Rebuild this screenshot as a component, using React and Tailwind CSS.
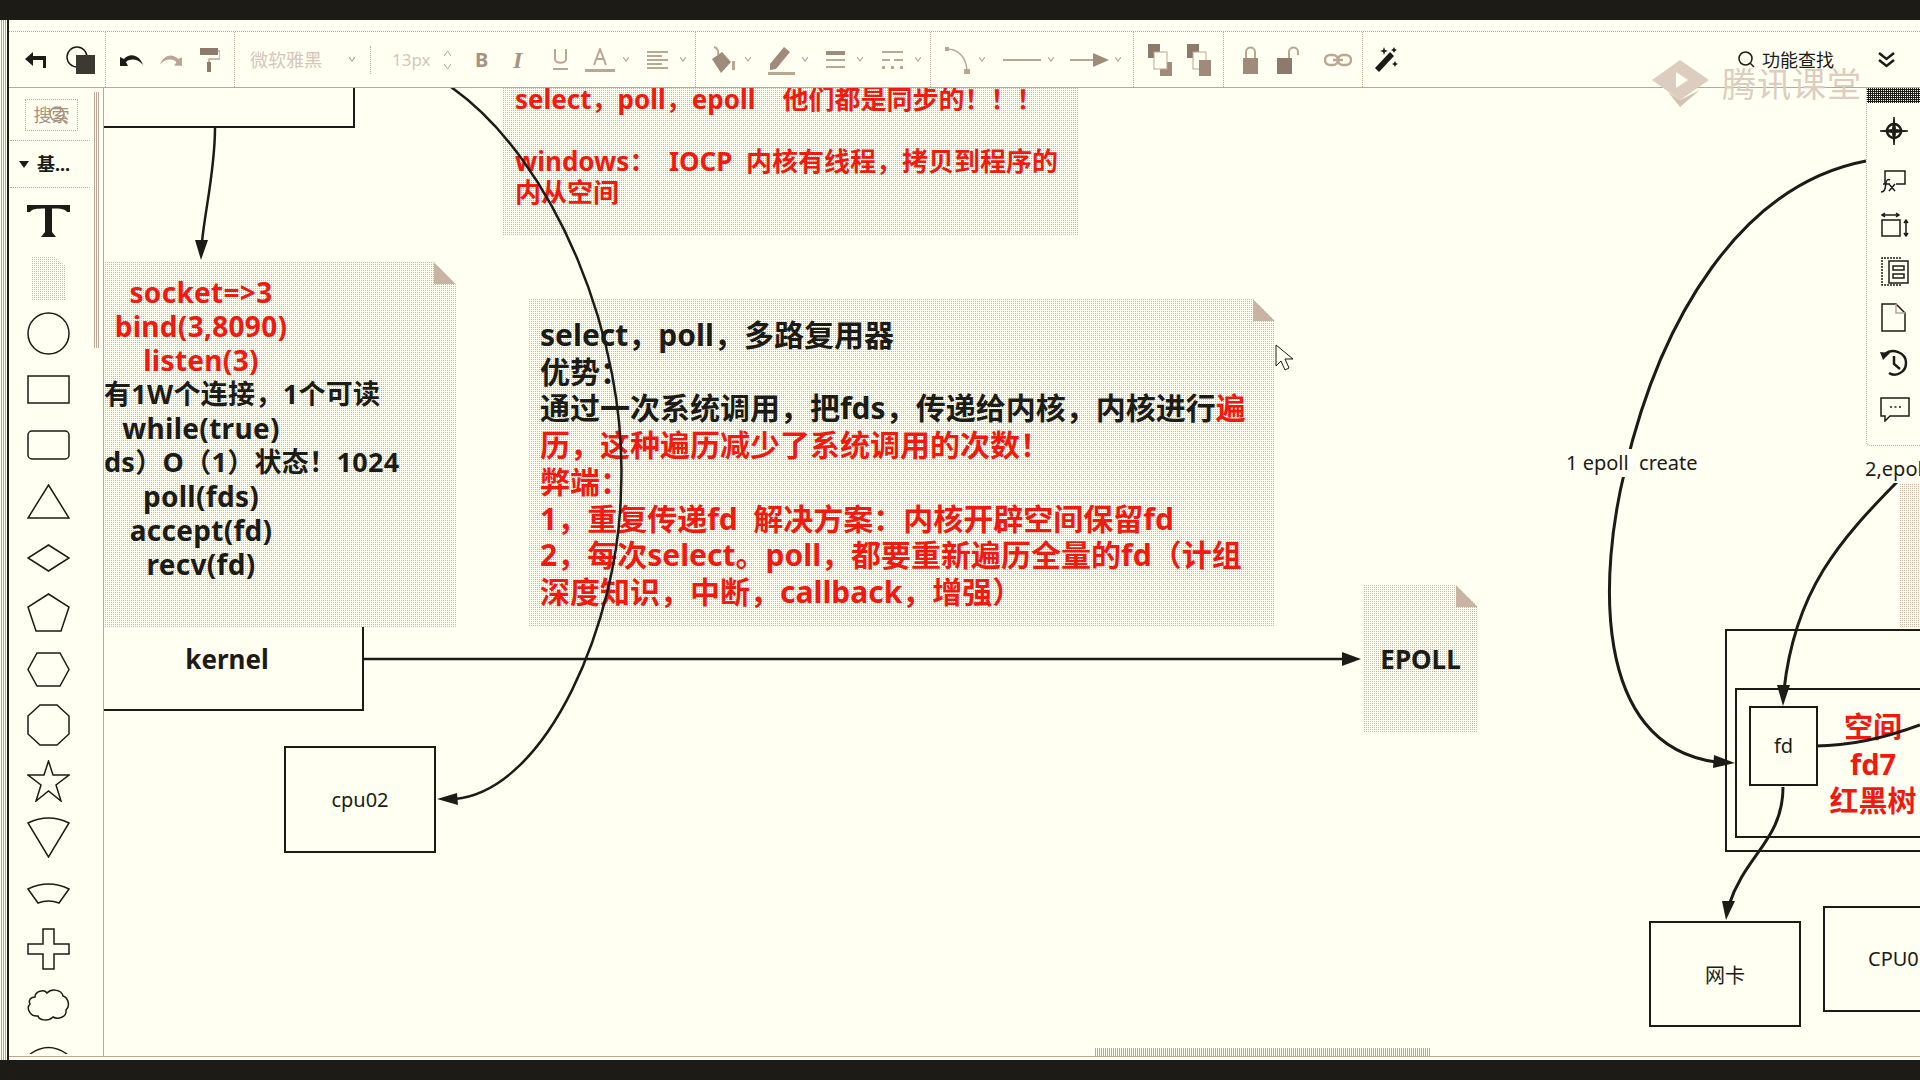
const tan = '#bda594';
const ink = '#1c1b16';

const Caret = ({ className = '' }) => (
  <svg width="6" height="5" viewBox="0 0 6 5" className={`shrink-0 ${className}`}>
    <path d="M0 0 L3 4 L6 0" fill="none" stroke={tan} strokeWidth="1.2" />
  </svg>
);

const Group = ({ className = '', children }) => (
  <div className={`flex h-full shrink-0 items-center border-r border-dotted border-[#bda594] ${className}`}>{children}</div>
);

const Note = ({ className = '', children }) => (
  <div className={`absolute bg-[conic-gradient(#c9b4a4_25%,#fffff2_0)] bg-[length:2px_2px] [clip-path:polygon(0_0,calc(100%-22px)_0,100%_22px,100%_100%,0_100%)] ${className}`}>
    <div className="absolute right-0 top-0 h-[22px] w-[22px] bg-[#c9b4a4] [clip-path:polygon(0_0,100%_100%,0_100%)]" />
    {children}
  </div>
);

const Box = ({ className = '', children }) => (
  <div className={`absolute flex items-center justify-center border-2 border-[#1c1b16] ${className}`}>{children}</div>
);

const Shape = ({ h, className = '', children }) => (
  <svg width="43" height={h} viewBox={`0 0 43 ${h}`} fill="none" stroke={ink} strokeWidth="1.5" className={`block shrink-0 ${className}`}>
    {children}
  </svg>
);

const Sidebar = () => (
  <div className="relative flex w-[95px] shrink-0 flex-col overflow-hidden border-r border-[#bda594]">
    <div className="absolute left-[84px] top-[4px] h-[256px] w-[7px] bg-[conic-gradient(#bda594_50%,#fffff2_0)] bg-[length:2px_2px]" />
    <div className="relative ml-[16px] mt-[11px] flex h-[32px] w-[53px] items-center justify-center border border-dotted border-[#bda594] text-[18px] text-[#a8917f]">
      搜索
      <svg width="20" height="20" viewBox="0 0 20 20" className="absolute left-[22px] top-[5px]" fill="none" stroke="#a8917f" strokeWidth="1.500"><circle cx="9" cy="9" r="7" /><path d="M14 14 L19 19" /></svg>
    </div>
    <div className="ml-[1px] mt-[9px] w-[80px] border-t border-dotted border-[#bda594]" />
    <div className="ml-[1px] flex h-[47px] w-[80px] items-center border-b border-dotted border-[#bda594] pl-[9px]">
      <svg width="10" height="7" viewBox="0 0 10 7"><path d="M0 0 H10 L5 7 Z" fill={ink} /></svg>
      <span className="ml-[8px] text-[18px] font-bold leading-none text-[#1c1b16]">基...</span>
    </div>
    <div className="flex flex-col items-start pl-[18px]">
      <svg width="43" height="32" viewBox="0 0 43 32" className="mt-[17px] block shrink-0" fill={ink}>
        <path d="M0 0 H43 V7 H40 C38 4 34 3.500 25 3.500 V27 L29 32 H14 L18 27 V3.500 C9 3.500 5 4 3 7 H0 Z" />
      </svg>
      <div className="ml-[4px] mt-[20px] h-[43px] w-[34px] bg-[conic-gradient(#c9b4a4_25%,#fffff2_0)] bg-[length:2px_2px] [clip-path:polygon(0_0,70%_0,100%_20%,100%_100%,0_100%)]" />
      <Shape h={43} className="mt-[12px]"><ellipse cx="21.500" cy="21.500" rx="20.500" ry="20.500" /></Shape>
      <Shape h={29} className="mt-[20px]"><rect x="1" y="1" width="41" height="27" /></Shape>
      <Shape h={30} className="mt-[26px]"><rect x="1" y="1" width="41" height="28" rx="4" /></Shape>
      <Shape h={35} className="mt-[24px]"><path d="M21.500 1 L42 34 H1 Z" /></Shape>
      <Shape h={28} className="mt-[25px]"><path d="M21.500 1 L42 14 L21.500 27 L1 14 Z" /></Shape>
      <Shape h={39} className="mt-[21px]"><path d="M21.500 1 L42 14 L34 38 H9 L1 14 Z" /></Shape>
      <Shape h={35} className="mt-[20px]"><path d="M10 1 H33 L42 17.500 L33 34 H10 L1 17.500 Z" /></Shape>
      <Shape h={42} className="mt-[17px]"><path d="M13 1 H30 L42 12 V30 L30 41 H13 L1 30 V12 Z" /></Shape>
      <Shape h={42} className="mt-[14px]"><path d="M21.500 1 L26 15 H42 L29 25 L34 41 L21.500 31 L9 41 L14 25 L1 15 H17 Z" /></Shape>
      <Shape h={42} className="mt-[14px]"><path d="M1 7 Q21.500 -3 42 7 L21.500 41 Z" /></Shape>
      <Shape h={22} className="mt-[24px]"><path d="M1 7 Q21.500 -3 42 7 L32 21 Q21.500 17 11 21 Z" /></Shape>
      <Shape h={42} className="mt-[24px]"><path d="M16 1 H27 V16 H42 V26 H27 V41 H16 V26 H1 V16 H16 Z" /></Shape>
      <Shape h={32} className="mt-[19px]"><path d="M8 8 C8 2 17 0 20 4 C25 -1 35 1 36 7 C42 9 43 18 39 21 C40 28 31 31 26 28 C21 33 12 31 11 27 C3 28 -1 19 3 15 C1 11 4 8 8 8 Z" /></Shape>
      <Shape h={9} className="mt-[24px]"><path d="M3 9 Q21.500 -4 40 9" /></Shape>
    </div>
  </div>
);

const Toolbar = () => (
  <div className="flex h-[57px] shrink-0 items-center border-b border-t border-b-[#bda594] border-t-[#bda594] [border-top-style:dotted]">
    <Group className="w-[97px] pl-[16px]">
      <svg width="22" height="16" viewBox="0 0 22 16" fill={ink}><path d="M0 7 L8 0 V4 H21 V16 H18 V8 H8 V14 Z" /></svg>
      <svg width="29" height="28" viewBox="0 0 29 28" className="ml-[19px]">
        <circle cx="11" cy="11" r="10" fill="none" stroke={ink} strokeWidth="1.500" />
        <rect x="10" y="9" width="19" height="19" fill="#3b3932" />
      </svg>
    </Group>
    <Group className="w-[129px] pl-[14px]">
      <svg width="23" height="12" viewBox="0 0 23 12" fill={ink}><path d="M0 3 V12 H8 L6 8 C11 4 18 5 23 11 C20 1 10 -2 4 5 Z" /></svg>
      <svg width="22" height="12" viewBox="0 0 23 12" fill={tan} className="ml-[17px] -scale-x-100"><path d="M0 3 V12 H8 L6 8 C11 4 18 5 23 11 C20 1 10 -2 4 5 Z" /></svg>
      <svg width="20" height="24" viewBox="0 0 20 24" className="ml-[18px]">
        <rect x="0" y="0" width="18" height="7" fill="#8d7a6b" />
        <path d="M18 3 H20 V11 H9 V14" fill="none" stroke={tan} strokeWidth="1.500" />
        <rect x="7" y="14" width="4" height="10" fill="#8d7a6b" />
      </svg>
    </Group>
    <Group className="w-[461px] pl-[15px] text-[#d5c6b9]">
      <span className="w-[72px] text-[18px] leading-none">微软雅黑</span>
      <Caret className="ml-[27px]" />
      <div className="ml-[15px] h-[28px] border-l border-dotted border-[#bda594]" />
      <span className="ml-[21px] w-[36px] text-[17px] leading-none">13px</span>
      <svg width="7" height="20" viewBox="0 0 7 20" className="ml-[16px]"><path d="M0 6 L3.500 1 L7 6 M0 14 L3.500 19 L7 14" fill="none" stroke={tan} /></svg>
      <span className="ml-[24px] w-[14px] text-[20px] font-bold leading-none text-[#a8917f]">B</span>
      <span className="ml-[24px] w-[16px] font-['Liberation_Serif',serif] text-[24px] font-bold italic leading-none text-[#a8917f]">I</span>
      <svg width="15" height="22" viewBox="0 0 15 22" className="ml-[24px]"><path d="M2 0 V10 C2 15 13 15 13 10 V0 M0 20 H15" fill="none" stroke={tan} strokeWidth="2" /></svg>
      <svg width="30" height="24" viewBox="0 0 30 24" className="ml-[17px]"><path d="M9 17 L15 1 L21 17 M11 11 H19" fill="none" stroke={tan} strokeWidth="2" /><rect y="21" width="30" height="3" fill={tan} /></svg>
      <Caret className="ml-[8px]" />
      <svg width="21" height="18" viewBox="0 0 21 18" fill={tan} className="ml-[18px]"><rect width="21" height="2" /><rect y="4" width="15" height="2" /><rect y="8" width="21" height="2" /><rect y="12" width="15" height="2" /><rect y="16" width="21" height="2" /></svg>
      <Caret className="ml-[12px]" />
    </Group>
    <Group className="w-[235px] pl-[13px]">
      <svg width="26" height="28" viewBox="0 0 26 28"><path d="M3 13 L13 6 L22 16 L12 27 Z" fill="#a08a79" /><path d="M5 1 C9 2 10 6 9 9" fill="none" stroke={tan} strokeWidth="2" /><rect x="23" y="15" width="3" height="9" fill={tan} /></svg>
      <Caret className="ml-[10px]" />
      <svg width="27" height="30" viewBox="0 0 27 30" className="ml-[17px]"><path d="M2 19 L16 2 L22 7 L8 24 L2 25 Z" fill="#a08a79" /><rect y="27" width="27" height="3" fill={tan} /></svg>
      <Caret className="ml-[7px]" />
      <svg width="19" height="18" viewBox="0 0 19 18" fill={tan} className="ml-[18px]"><rect width="19" height="4" fill="#a08a79" /><rect y="8" width="19" height="2" /><rect y="15" width="19" height="2" /></svg>
      <Caret className="ml-[12px]" />
      <svg width="21" height="18" viewBox="0 0 21 18" fill={tan} className="ml-[19px]"><rect width="21" height="2" /><rect y="8" width="8" height="2" /><rect x="12" y="8" width="9" height="2" /><rect y="15" width="3" height="3" /><rect x="9" y="15" width="3" height="3" /><rect x="18" y="15" width="3" height="3" /></svg>
      <Caret className="ml-[12px]" />
    </Group>
    <Group className="w-[203px] pl-[14px]">
      <svg width="25" height="28" viewBox="0 0 25 28"><path d="M2 3 C14 3 21 12 22 24" fill="none" stroke={tan} strokeWidth="1.500" /><rect x="0" y="1" width="4" height="4" fill={tan} /><rect x="19" y="23" width="6" height="5" fill={tan} /></svg>
      <Caret className="ml-[9px]" />
      <svg width="38" height="4" viewBox="0 0 38 4" className="ml-[18px]"><rect y="1" width="38" height="2" fill={tan} /></svg>
      <Caret className="ml-[7px]" />
      <svg width="39" height="14" viewBox="0 0 39 14" className="ml-[16px]"><rect y="6" width="24" height="2" fill={tan} /><path d="M23 0 L39 7 L23 14 Z" fill="#a08a79" /></svg>
      <Caret className="ml-[6px]" />
    </Group>
    <Group className="w-[90px] pl-[14px]">
      <svg width="24" height="32" viewBox="0 0 24 32"><rect width="12" height="14" fill="#8d7a6b" /><rect x="12" y="18" width="12" height="14" fill="#a08a79" /><rect x="6" y="8" width="13" height="17" fill="#fffff2" stroke={tan} /></svg>
      <svg width="24" height="32" viewBox="0 0 24 32" className="ml-[15px]"><rect width="12" height="14" fill="#8d7a6b" /><rect x="6" y="8" width="13" height="17" fill="#fffff2" stroke={tan} /><rect x="12" y="16" width="12" height="16" fill="#a08a79" /></svg>
    </Group>
    <Group className="w-[139px] pl-[19px]">
      <svg width="15" height="28" viewBox="0 0 15 28"><path d="M3 12 V6 C3 0 12 0 12 6 V12" fill="none" stroke={tan} strokeWidth="2" /><rect y="12" width="15" height="16" fill="#a08a79" /></svg>
      <svg width="23" height="28" viewBox="0 0 23 28" className="ml-[19px]"><path d="M12 12 V6 C12 0 21 0 21 6 V9" fill="none" stroke={tan} strokeWidth="2" /><rect y="12" width="15" height="16" fill="#8d7a6b" /></svg>
      <svg width="28" height="14" viewBox="0 0 28 14" className="ml-[24px]" fill="none" stroke={tan} strokeWidth="2.500"><rect x="1" y="2" width="13" height="10" rx="5" /><rect x="14" y="2" width="13" height="10" rx="5" /><path d="M9 7 H19" /></svg>
    </Group>
    <div className="flex h-full items-center pl-[12px]">
      <svg width="23" height="26" viewBox="0 0 23 26" fill={ink}><path d="M0 21 L15 5 L19 9 L4 25 Z" /><path d="M9 0 L10 3 L13 4 L10 5 L9 8 L8 5 L5 4 L8 3 Z M19 0 L20 2 L22 3 L20 4 L19 6 L18 4 L16 3 L18 2 Z M20 14 L21 16 L23 17 L21 18 L20 20 L19 18 L17 17 L19 16 Z" /></svg>
    </div>
    <div className="ml-auto flex items-center pr-[25px]">
      <svg width="17" height="17" viewBox="0 0 17 17" fill="none" stroke={ink} strokeWidth="1.500"><circle cx="7.500" cy="7.500" r="6.500" /><path d="M12 12 L16 16" /></svg>
      <span className="ml-[7px] w-[71px] whitespace-nowrap text-[18px] leading-none text-[#1c1b16]">功能查找</span>
      <svg width="17" height="16" viewBox="0 0 17 16" fill="none" stroke={ink} strokeWidth="2.500" className="ml-[45px]"><path d="M1 1 L8.500 7 L16 1 M1 8 L8.500 14 L16 8" /></svg>
    </div>
  </div>
);

const RightPanel = () => (
  <div className="absolute left-[1762px] top-0 flex h-[358px] w-[60px] flex-col items-start overflow-hidden rounded-bl-[4px] border-b border-l border-dotted border-[#bda594] bg-[#fffff2]">
    <div className="h-[15px] w-full shrink-0 bg-[conic-gradient(#1c1b16_75%,#fffff2_0)] bg-[length:2px_2px]" />
    <svg width="28" height="28" viewBox="0 0 28 28" className="ml-[13px] mt-[14px]" fill="none" stroke={ink}>
      <circle cx="14" cy="14" r="7" strokeWidth="2.500" /><path d="M14 0 L15.500 12.500 L28 14 L15.500 15.500 L14 28 L12.500 15.500 L0 14 L12.500 12.500 Z" fill={ink} />
    </svg>
    <svg width="26" height="23" viewBox="0 0 26 23" className="ml-[13px] mt-[25px]" fill="none" stroke={ink} strokeWidth="1.500">
      <path d="M5 14 V1 H25 V14 H16" /><path d="M1 22 C5 22 5 19 6 13 C6 10 8 9 10 10 M3 14 H10 M9 14 L15 21 M15 14 L9 21" />
    </svg>
    <svg width="28" height="25" viewBox="0 0 28 25" className="ml-[14px] mt-[19px]" fill="none" stroke={ink} strokeWidth="1.500">
      <rect x="1" y="8" width="18" height="16" /><path d="M1 3 H18 M4 1 L1 3 L4 5 M15 1 L18 3 L15 5 M25 8 V24 M23 11 L25 8 L27 11 M23 21 L25 24 L27 21" />
    </svg>
    <svg width="28" height="29" viewBox="0 0 28 29" className="ml-[14px] mt-[20px]" fill="none" stroke={ink} strokeWidth="1.500">
      <path d="M20 1 H1 V28 H20" strokeDasharray="2 1" /><rect x="8" y="4" width="19" height="22" /><path d="M12 9 H23 V13 H12 Z M12 17 H23 V21 H12 Z" />
    </svg>
    <svg width="25" height="29" viewBox="0 0 25 29" className="ml-[14px] mt-[17px]" fill="none" stroke={ink} strokeWidth="1.500">
      <path d="M1 1 H15 L24 10 V28 H1 Z" /><path d="M15 1 V10 H24" stroke={tan} />
    </svg>
    <svg width="28" height="28" viewBox="0 0 28 28" className="ml-[13px] mt-[17px]" fill="none" stroke={ink} strokeWidth="2.500">
      <path d="M5 5 C12 -1 26 3 26 14 C26 24 15 28 9 24" /><path d="M14 7 V15 L20 20" /><path d="M0 3 L10 4 L3 11 Z" fill={ink} stroke="none" />
    </svg>
    <svg width="30" height="25" viewBox="0 0 30 25" className="ml-[13px] mt-[20px]" fill="none" stroke={ink} strokeWidth="1.500">
      <path d="M1 1 H29 V19 H10 L5 24 V19 H1 Z" /><path d="M10 10 H12 M14.500 10 H16.500 M19 10 H21" />
    </svg>
  </div>
);

const Canvas = () => (
  <div className="relative flex-1 overflow-hidden">
    <Box className="left-[-10px] top-[-40px] h-[80px] w-[261px]" />
    <Box className="left-[-14px] top-[520px] h-[103px] w-[274px] text-[26px] font-bold text-[#1c1b16]">kernel</Box>
    <Box className="left-[180px] top-[658px] h-[107px] w-[152px] pt-[1px] text-[20px] text-[#1c1b16]">cpu02</Box>
    <Box className="left-[1621px] top-[541px] h-[223px] w-[400px]" />
    <Box className="left-[1631px] top-[600px] h-[150px] w-[400px]" />
    <Box className="left-[1645px] top-[618px] h-[80px] w-[69px] text-[20px] text-[#1c1b16]">fd</Box>
    <Box className="left-[1545px] top-[833px] h-[106px] w-[152px] pt-[4px] text-[20px] text-[#1c1b16]">网卡</Box>
    <Box className="left-[1719px] top-[818px] h-[106px] w-[300px] justify-start pl-[43px] text-[20px] text-[#1c1b16]">CPU0</Box>

    {/* notes */}
    <div className="absolute left-[398px] top-[-4px] h-[151px] w-[577px] whitespace-pre bg-[conic-gradient(#c9b4a4_25%,#fffff2_0)] bg-[length:2px_2px] pl-[13px] text-[26px] font-bold leading-[31px] text-[#f01a10]">
      <div>select，poll，epoll    他们都是同步的！！！</div>
      <div className="h-[31px]" />
      <div>windows：  IOCP  内核有线程，拷贝到程序的</div>
      <div>内从空间</div>
    </div>
    <Note className="left-0 top-[174px] h-[365px] w-[352px] text-[28px] font-bold leading-[34px] tracking-[0.3px] text-[#1c1b16]">
      <div className="flex w-[194px] flex-col items-center whitespace-nowrap pt-[13px]">
        <div className="text-[#f01a10]">socket=&gt;3</div>
        <div className="text-[#f01a10]">bind(3,8090)</div>
        <div className="text-[#f01a10]">listen(3)</div>
        <div className="self-start text-[27px]">有1W个连接，1个可读</div>
        <div>while(true)</div>
        <div className="self-start text-[27px]">ds）O（1）状态！1024</div>
        <div>poll(fds)</div>
        <div>accept(fd)</div>
        <div>recv(fd)</div>
      </div>
    </Note>
    <Note className="left-[424px] top-[211px] h-[328px] w-[747px] whitespace-pre pl-[12px] pt-[18px] text-[30px] font-bold leading-[36.7px] text-[#1c1b16]">
      <div>select，poll，多路复用器</div>
      <div>优势：</div>
      <div>通过一次系统调用，把fds，传递给内核，内核进行<span className="text-[#f01a10]">遍</span></div>
      <div className="text-[#f01a10]">
        <div>历，这种遍历减少了系统调用的次数！</div>
        <div>弊端：</div>
        <div>1，重复传递fd  解决方案：内核开辟空间保留fd</div>
        <div>2，每次select。poll，都要重新遍历全量的fd（计组</div>
        <div>深度知识，中断，callback，增强）</div>
      </div>
    </Note>
    <Note className="left-[1259px] top-[497px] flex h-[148px] w-[115px] items-center justify-center text-[26px] font-bold text-[#1c1b16]">EPOLL</Note>
    <div className="absolute left-[1795px] top-[396px] h-[144px] w-[30px] bg-[conic-gradient(#c9b4a4_25%,#fffff2_0)] bg-[length:2px_2px]" />

    <div className="absolute left-[1709px] top-[620px] w-[120px] text-center text-[29px] font-bold leading-[37px] text-[#f01a10]">
      <div>空间</div>
      <div>fd7</div>
      <div className="whitespace-nowrap">红黑树</div>
    </div>

    {/* connectors, in page coordinates */}
    <svg viewBox="104 88 1816 968" className="absolute inset-0 h-full w-full" fill="none" stroke={ink} strokeWidth="2.500">
      <path d="M215 128 C215 170 205 210 202 242" />
      <path d="M363 659 H1345" strokeWidth="2.500" />
      <path d="M451 87 C555 160 628 340 621 490 C619 620 548 790 455 799" strokeWidth="2.500" />
      <path d="M1866 161 C1740 185 1660 320 1625 470 C1600 570 1590 745 1716 762" strokeWidth="3" />
      <path d="M1897 482 C1840 540 1795 590 1784 690" strokeWidth="3" />
      <path d="M1783 787 C1783 840 1745 855 1729 905" strokeWidth="3" />
      <path d="M1816 746 C1850 746 1885 738 1920 725" strokeWidth="3" />
      <g fill={ink} stroke="none">
        <path d="M195 240 H208 L201 260 Z" />
        <path d="M1342 652 V666 L1361 659 Z" />
        <path d="M437 799 L457 793 L458 805 Z" />
        <path d="M1735 763 L1714 755 L1713 768 Z" />
        <path d="M1783 706 L1777 685 H1790 Z" />
        <path d="M1726 920 L1722 901 H1735 Z" />
      </g>
      <path d="M1276 345 V366 L1281 361 L1285 370 L1289 368 L1285 359 L1293 359 Z" fill="#fffff2" stroke={ink} strokeWidth="1" />
    </svg>

    <div className="absolute left-[1462px] top-[361px] whitespace-pre bg-[#fffff2] text-[20px] leading-[28px] text-[#1c1b16]">1 epoll  create</div>
    <div className="absolute left-[1761px] top-[367px] whitespace-pre bg-[#fffff2] text-[20px] leading-[28px] text-[#1c1b16]">2,epoll</div>
    <RightPanel />
  </div>
);

export default function App() {
  return (
    <div className="relative flex h-[1080px] w-[1920px] flex-col overflow-hidden bg-[#fffff2] font-['Noto_Sans','Noto_Sans_CJK_SC',sans-serif]">
      <div className="h-[20px] shrink-0 bg-[#1c1b16]" />
      <div className="flex min-h-0 flex-1">
        <div className="w-[7px] shrink-0 bg-[conic-gradient(#bda594_50%,#fffff2_0)] bg-[length:2px_2px]" />
        <div className="w-[2px] shrink-0 bg-[#1c1b16]" />
        <div className="flex min-w-0 flex-1 flex-col">
          <div className="h-[11px] shrink-0" />
          <Toolbar />
          <div className="flex min-h-0 flex-1">
            <Sidebar />
            <Canvas />
          </div>
          <div className="relative h-[4px] shrink-0 border-t border-[#bda594]">
            <div className="absolute bottom-[4px] left-[1085px] h-[8px] w-[336px] bg-[conic-gradient(#bda594_50%,#fffff2_0)] bg-[length:2px_2px]" />
          </div>
        </div>
      </div>
      <div className="h-[20px] shrink-0 bg-[#1c1b16]" />

      {/* watermark */}
      <div className="absolute left-[1652px] top-[60px] flex items-center">
        <svg width="57" height="47" viewBox="0 0 57 47">
          <path d="M28 0 L57 20 L28 40 L0 20 Z" fill="#dccdc0" />
          <path d="M16 32 L28 47 L48 30 L28 40 Z" fill="#d4c3b5" />
          <path d="M24 12 L36 20 L24 28 Z" fill="#fffff2" />
        </svg>
        <span className="ml-[13px] whitespace-nowrap text-[34px] leading-none tracking-[1px] text-[#dccdc0]">腾讯课堂</span>
      </div>
    </div>
  );
}
